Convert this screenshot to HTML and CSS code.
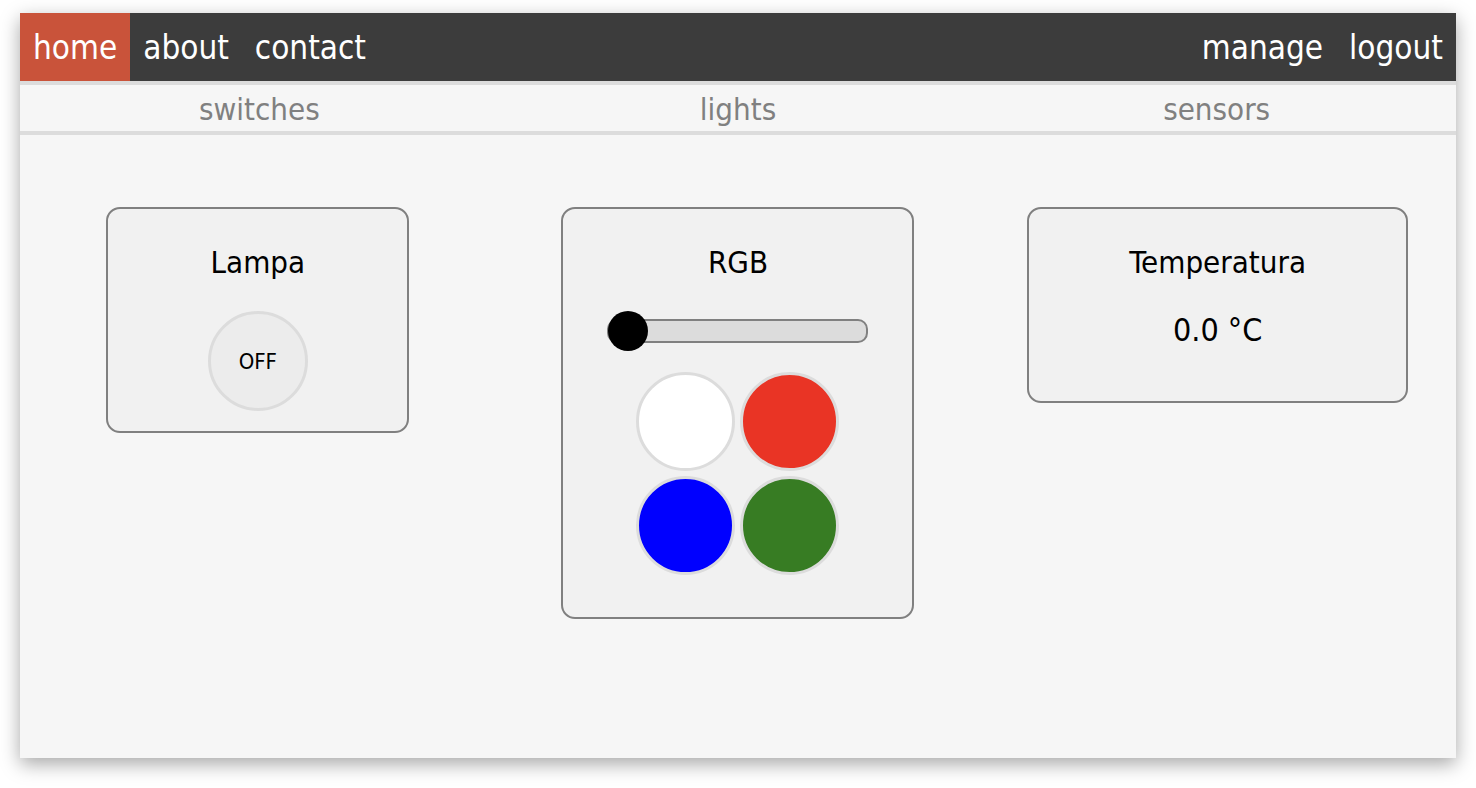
FILE: index.html
```html
<!DOCTYPE html>
<html lang="it">
<head>
    <meta charset="UTF-8">
    <meta name="viewport" content="width=device-width, initial-scale=1.0">
    <title>Casa</title>
    <link rel="stylesheet" href="styles.css">
</head>
<body>
    <div class="window">
        <nav class="topnav">
            <div class="nav-left">
                <a href="#" class="active">home</a>
                <a href="#">about</a>
                <a href="#">contact</a>
            </div>
            <div class="nav-right">
                <a href="#">manage</a>
                <a href="#">logout</a>
            </div>
        </nav>

        <div class="tabs">
            <span>switches</span>
            <span>lights</span>
            <span>sensors</span>
        </div>

        <main class="columns">
            <section class="column">
                <div class="card card-switch">
                    <h2 class="card-title">Lampa</h2>
                    <button class="toggle">OFF</button>
                </div>
            </section>

            <section class="column">
                <div class="card card-light">
                    <h2 class="card-title">RGB</h2>
                    <div class="slider">
                        <div class="slider-thumb"></div>
                    </div>
                    <div class="colors">
                        <button class="color white"></button>
                        <button class="color red"></button>
                        <button class="color blue"></button>
                        <button class="color green"></button>
                    </div>
                </div>
            </section>

            <section class="column">
                <div class="card card-sensor">
                    <h2 class="card-title">Temperatura</h2>
                    <p class="sensor-value">0.0 °C</p>
                </div>
            </section>
        </main>
    </div>
</body>
</html>
```

FILE: styles.css
```css
body {
    margin: 0;
    padding-bottom: 30px;
    background: #fff;
    font-family: "DejaVu Sans Condensed", "DejaVu Sans", sans-serif;
}
.window {
    margin: 13px 20px 0;
    width: 1436px;
    height: 745px;
    background: #f6f6f6;
    box-shadow: 0 6px 18px rgba(0, 0, 0, 0.35);
    overflow: hidden;
}
.topnav {
    display: flex;
    justify-content: space-between;
    height: 68px;
    background: #3c3c3c;
}
.nav-left, .nav-right {
    display: flex;
}
.topnav a {
    display: flex;
    align-items: center;
    padding: 0 13px;
    color: #fff;
    text-decoration: none;
    font-size: 33px;
}
.topnav a.active {
    background: #c9533a;
}
.tabs {
    display: grid;
    grid-template-columns: repeat(3, 1fr);
    height: 46px;
    border-top: 4px solid #dcdcdc;
    border-bottom: 4px solid #dcdcdc;
}
.tabs span {
    display: flex;
    align-items: center;
    justify-content: center;
    color: #808080;
    font-size: 31px;
    padding-top: 2px;
}
.columns {
    display: grid;
    grid-template-columns: repeat(3, 1fr);
    align-items: start;
    padding-top: 72px;
}
.column {
    display: flex;
    justify-content: center;
}
.card {
    display: flex;
    flex-direction: column;
    align-items: center;
    box-sizing: border-box;
    padding: 36px 0 20px;
    background: #f1f1f1;
    border: 2px solid #808080;
    border-radius: 14px;
}
.card-switch {
    width: 303px;
    margin-left: -3px;
}
.card-light {
    width: 353px;
    padding-bottom: 42px;
}
.card-sensor {
    width: 381px;
    margin-left: 2px;
    padding-bottom: 54px;
}
.card-title {
    margin: 0;
    font-size: 31px;
    font-weight: normal;
    line-height: 34px;
    color: #000;
}
.toggle {
    margin-top: 32px;
    width: 100px;
    height: 100px;
    border: 3px solid #dcdcdc;
    border-radius: 50%;
    background: #ececec;
    font-family: inherit;
    font-size: 22px;
    color: #000;
}
.slider {
    position: relative;
    margin-top: 40px;
    width: 261px;
    height: 24px;
    box-sizing: border-box;
    background: #dcdcdc;
    border: 2px solid #808080;
    border-radius: 10px;
}
.slider-thumb {
    position: absolute;
    left: -1px;
    top: -10px;
    width: 40px;
    height: 40px;
    border-radius: 50%;
    background: #000;
}
.colors {
    display: grid;
    grid-template-columns: repeat(2, 99px);
    gap: 5px;
    margin-top: 29px;
}
.color {
    width: 99px;
    height: 99px;
    padding: 0;
    border: 3px solid #dcdcdc;
    border-radius: 50%;
}
.color.white { background: #fff; }
.color.red { background: #e93425; }
.color.blue { background: #0000ff; }
.color.green { background: #377c23; }
.sensor-value {
    margin: 34px 0 0;
    font-size: 32px;
    line-height: 34px;
}
```
